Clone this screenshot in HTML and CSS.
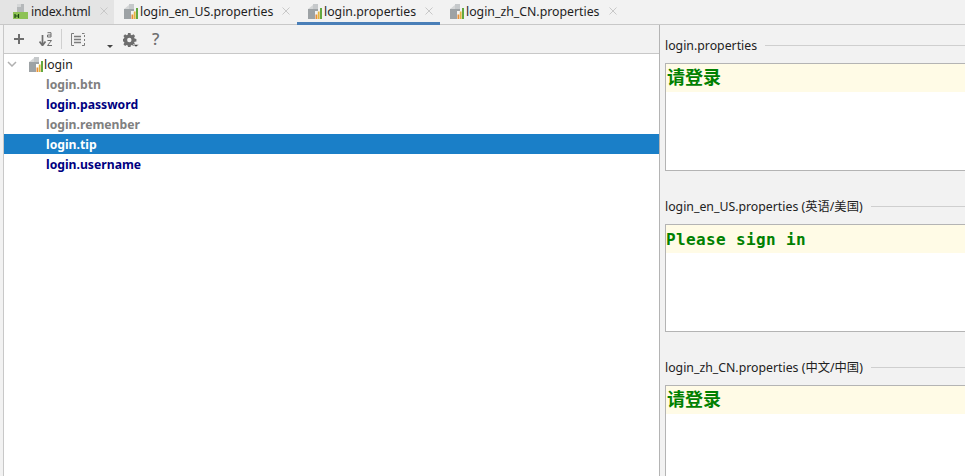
FILE: index.html
```html
<!DOCTYPE html>
<html lang="zh-CN">
<head>
<meta charset="utf-8">
<title>login.properties</title>
<link rel="stylesheet" href="styles.css">
</head>
<body>
<svg class="defs" width="0" height="0" aria-hidden="true">
  <symbol id="bundle" viewBox="0 0 14 15">
    <path d="M5 0h5v5H5z" fill="#c6c9cb"/>
    <path d="M0 5h5V1L0 5z" fill="#d4d6d7"/>
    <path d="M0 5h10v2H7v8H0z" fill="#9da2a5"/>
    <rect x="7.500" y="10.500" width="1.800" height="4.500" fill="#e8903a"/>
    <rect x="9.800" y="7.500" width="1.800" height="7.500" fill="#e5b53e"/>
    <rect x="12" y="4" width="2" height="11" fill="#63a840"/>
  </symbol>
  <symbol id="close" viewBox="0 0 8 8">
    <path d="M.5.500l7 7M7.500.500l-7 7" stroke="#c8c8c8" stroke-width="1" fill="none"/>
  </symbol>
</svg>

<div class="tabs">
  <div class="tab tab-html">
    <svg class="tab-icon-html" viewBox="0 0 15 15"><path d="M4 0h7v8H4z" fill="#b5b8ba"/><path d="M4 0h4v3H4z" fill="#d4d6d7"/><path d="M0 8h15v7H0z" fill="#8ec255"/><path d="M2 10v4M5.500 10v4M2 12h3.500" stroke="#1c4a14" stroke-width="1.200" fill="none"/></svg>
    <span class="tab-name tab-name-tight">index.html</span>
    <svg class="tab-close"><use href="#close"/></svg>
  </div>
  <div class="tab tab-en">
    <svg class="tab-icon"><use href="#bundle"/></svg>
    <span class="tab-name">login_en_US.properties</span>
    <svg class="tab-close"><use href="#close"/></svg>
  </div>
  <div class="tab tab-active">
    <svg class="tab-icon"><use href="#bundle"/></svg>
    <span class="tab-name">login.properties</span>
    <svg class="tab-close"><use href="#close"/></svg>
  </div>
  <div class="tab tab-zh">
    <svg class="tab-icon"><use href="#bundle"/></svg>
    <span class="tab-name">login_zh_CN.properties</span>
    <svg class="tab-close"><use href="#close"/></svg>
  </div>
</div>

<div class="main">
  <div class="left">
    <div class="toolbar">
      <svg class="tool tool-add" viewBox="0 0 10 10"><path d="M5 0v10M0 5h10" stroke="#6e6e6e" stroke-width="2" fill="none"/></svg>
      <svg class="tool tool-sort" viewBox="0 0 13 14"><path d="M3.500 3v10M.5 9.500l3 4 3-4" stroke="#6e6e6e" stroke-width="1.700" fill="none"/><path d="M8.500.7h3.500v4.300H8.500V3h3.500M8.500 8.500h4l-4 5h4.500" stroke="#6e6e6e" stroke-width="1" fill="none"/></svg>
      <span class="tool-sep"></span>
      <svg class="tool tool-group" viewBox="0 0 14 13"><path d="M3 .5H.5v12H3M11 .5h2.500M13.500 2v2M13.500 6v2M13.500 10v2.500H11" stroke="#7c7c7c" stroke-width="1" fill="none"/><path d="M3 3.500h7M3 6.500h7M3 9.500h7" stroke="#7c7c7c" stroke-width="1.300" fill="none"/></svg>
      <svg class="tool tool-drop" viewBox="0 0 6 3"><path d="M0 0h6L3 3z" fill="#444"/></svg>
      <svg class="tool tool-gear" viewBox="0 0 16 14"><path d="M5 0h2.500l.3 1.800 1.100.5 1.500-1 1.700 1.700-1 1.500.5 1.100 1.800.3v2.500l-1.800.3-.5 1.100 1 1.500-1.700 1.700-1.500-1-1.100.5-.3 1.500H5l-.3-1.500-1.100-.5-1.500 1L.4 11.300l1-1.500-.5-1.100L0 8.400V5.900l.9-.3.500-1.100-1-1.500L2.100 1.300l1.500 1 1.100-.5z" fill="#6e6e6e"/><circle cx="6.300" cy="7" r="2.200" fill="#f2f2f2"/><path d="M10 11.500h6l-3 2.500z" fill="#444" stroke="#f2f2f2" stroke-width=".5"/></svg>
      <span class="tool-help">?</span>
    </div>
    <div class="tree">
      <div class="root-row">
        <svg class="chevron" viewBox="0 0 10 6"><path d="M1 1l4 4 4-4" stroke="#b0b0b0" stroke-width="1.500" fill="none"/></svg>
        <svg class="root-icon"><use href="#bundle"/></svg>
        <span class="root-name">login</span>
      </div>
      <div class="row muted">login.btn</div>
      <div class="row strong">login.password</div>
      <div class="row muted">login.remenber</div>
      <div class="row selected">login.tip</div>
      <div class="row strong">login.username</div>
    </div>
  </div>

  <div class="right">
    <section class="locale locale-first">
      <div class="legend"><span>login.properties</span><i></i></div>
      <div class="box"><div class="line cjk">请登录</div></div>
    </section>
    <section class="locale">
      <div class="legend"><span>login_en_US.properties (英语/美国)</span><i></i></div>
      <div class="box"><div class="line mono">Please sign in</div></div>
    </section>
    <section class="locale">
      <div class="legend"><span>login_zh_CN.properties (中文/中国)</span><i></i></div>
      <div class="box"><div class="line cjk">请登录</div></div>
    </section>
  </div>
</div>
</body>
</html>
```
FILE: styles.css
```css
* { box-sizing: border-box; }
html, body { margin: 0; height: 100%; overflow: hidden; }
body {
  width: 965px;
  height: 476px;
  background: #f2f2f2;
  font-family: "Noto Sans", "Noto Sans CJK SC", sans-serif;
  font-size: 12.3px;
  color: #1e1e1e;
  display: flex;
  flex-direction: column;
}
.defs { position: absolute; }

/* tabs */
.tabs {
  display: flex;
  height: 25px;
  flex: none;
  background: #f2f2f2;
  border-bottom: 1px solid #c8c8c8;
}
.tab {
  display: flex;
  align-items: center;
  height: 24px;
  padding: 0 0 2px 0;
  position: relative;
}
.tab-html { width: 114px; padding-left: 13px; background: #e4e4e4; }
.tab-en { width: 183px; padding-left: 10px; }
.tab-active { width: 143px; padding-left: 11px; }
.tab-active::after {
  content: "";
  position: absolute;
  left: 0; right: 0; bottom: -1px;
  height: 3px;
  background: #4a7fb8;
}
.tab-zh { padding-left: 10px; }
.tab-icon { width: 14px; height: 15px; flex: none; margin-right: 2px; }
.tab-icon-html { width: 15px; height: 15px; flex: none; margin-right: 3px; }
.tab-name { white-space: nowrap; }
.tab-name-tight { letter-spacing: -.2px; }
.tab-close { width: 8px; height: 8px; margin-left: 9px; flex: none; }

/* main split */
.main { flex: 1; display: flex; min-height: 0; }
.left {
  width: 657px;
  flex: none;
  margin-left: 3px;
  border-left: 1px solid #c8c8c8;
  border-right: 1px solid #b4b4b4;
  display: flex;
  flex-direction: column;
}

/* toolbar */
.toolbar {
  height: 29px;
  flex: none;
  display: flex;
  align-items: center;
  background: #f2f2f2;
  border-bottom: 1px solid #c8c8c8;
}
.tool { flex: none; }
.tool-add { width: 10px; height: 10px; margin-left: 10px; }
.tool-sort { width: 13px; height: 14px; margin-left: 15px; }
.tool-sep { width: 1px; height: 20px; background: #d0d0d0; margin-left: 9px; }
.tool-group { width: 14px; height: 13px; margin-left: 9px; }
.tool-drop { width: 6px; height: 3px; margin-left: 22px; align-self: flex-end; margin-bottom: 5px; }
.tool-gear { width: 16px; height: 14px; margin-left: 10px; margin-top: 1px; }
.tool-help { margin-left: 13px; font-size: 16.5px; font-weight: 500; color: #6e6e6e; line-height: 1; }

/* tree */
.tree { flex: 1; background: #fff; font-size: 12.2px; }
.root-row { height: 20px; display: flex; align-items: center; }
.chevron { width: 10px; height: 6px; margin-left: 3px; flex: none; }
.root-icon { width: 14px; height: 15px; margin-left: 12px; margin-right: 1px; flex: none; }
.root-name { color: #222; }
.row { height: 20px; line-height: 22px; padding-left: 42px; font-weight: 700; }
.muted { color: #808080; }
.strong { color: #000080; }
.selected { background: #1a7fc8; color: #fff; }

/* right */
.right { flex: 1; min-width: 0; overflow: hidden; }
.locale { margin: 0 -10px 0 5px; }
.locale-first { margin-top: 11px; }
.legend { height: 18px; margin-bottom: 9px; display: flex; align-items: center; gap: 8px; white-space: nowrap; color: #222; }
.legend i { flex: 1; height: 1px; background: #cfcfcf; }
.box {
  height: 108px;
  background: #fff;
  border: 1px solid #b4b4b4;
  margin-bottom: 26px;
}
.line {
  height: 28px;
  background: #fffbe6;
  color: #008000;
  font-weight: 700;
  padding-left: 1px;
  line-height: 25px;
  white-space: nowrap;
}
.cjk { font-family: "Noto Sans CJK SC", sans-serif; font-size: 18px; }
.mono { font-family: "DejaVu Sans Mono", monospace; font-size: 16px; letter-spacing: .37px; padding-left: 0; line-height: 29px; }
```
